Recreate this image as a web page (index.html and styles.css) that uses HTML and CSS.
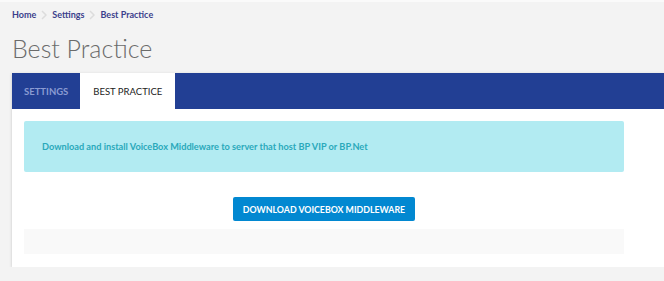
FILE: index.html
```html
<!DOCTYPE html>
<html lang="en">
<head>
    <meta charset="UTF-8">
    <meta name="viewport" content="width=device-width, initial-scale=1.0">
    <title>Best Practice</title>
    <link rel="stylesheet" href="styles.css">
</head>
<body>
    <div class="page">
        <nav class="breadcrumb">
            <a href="#">Home</a>
            <svg class="sep" width="6" height="10" viewBox="0 0 6 10"><path d="M1 1l4 4-4 4" fill="none" stroke="#dcdcdc" stroke-width="1.5"/></svg>
            <a href="#">Settings</a>
            <svg class="sep" width="6" height="10" viewBox="0 0 6 10"><path d="M1 1l4 4-4 4" fill="none" stroke="#dcdcdc" stroke-width="1.5"/></svg>
            <a href="#">Best Practice</a>
        </nav>
        <h1 class="page-title">Best Practice</h1>

        <div class="card">
            <div class="tabs">
                <a href="#" class="tab">Settings</a>
                <a href="#" class="tab active">Best Practice</a>
            </div>
            <div class="card-body">
                <div class="alert-info">
                    Download and install VoiceBox Middleware to server that host BP VIP or BP.Net
                </div>
                <div class="actions">
                    <button class="download-button">Download VoiceBox Middleware</button>
                </div>
                <div class="well"></div>
            </div>
        </div>
    </div>
</body>
</html>
```

FILE: styles.css
```css
* {
    margin: 0;
    padding: 0;
    box-sizing: border-box;
    font-family: 'Lato', 'Liberation Sans', sans-serif;
}
body {
    background-color: #f3f3f3;
    color: #333;
    border-top: 2px solid #fafafa;
}
.page {
    padding: 0 0 0 12px;
}
.breadcrumb {
    display: flex;
    align-items: center;
    height: 25px;
    font-size: 9px;
    font-weight: 700;
}
.breadcrumb a {
    color: #3b3f8c;
    text-decoration: none;
}
.breadcrumb .sep {
    margin: 0 5px;
}
.page-title {
    font-size: 25px;
    font-weight: 300;
    color: #6b6b6b;
    line-height: 1;
    padding: 9px 0 12px;
}
.card {
    background: white;
    box-shadow: 0 1px 3px rgba(0,0,0,0.18);
}
.tabs {
    display: flex;
    height: 36px;
    background-color: #223f94;
}
.tab {
    display: flex;
    align-items: center;
    padding: 0 12px;
    font-size: 9.5px;
    font-weight: 700;
    text-transform: uppercase;
    text-decoration: none;
    color: #8a9bd2;
}
.tab.active {
    background: white;
    color: #222;
    font-weight: 400;
    padding: 0 13px;
}
.card-body {
    width: 624px;
    padding: 12px 12px 13px;
}
.alert-info {
    height: 51px;
    display: flex;
    align-items: center;
    padding: 0 18px 1px;
    background-color: #b2ebf2;
    color: #2aa9bb;
    font-size: 9.2px;
    font-weight: 700;
    border-radius: 2px;
}
.actions {
    display: flex;
    justify-content: center;
    padding: 25px 0 8px;
}
.download-button {
    background-color: #0288d1;
    color: white;
    border: none;
    border-radius: 2px;
    height: 24px;
    padding: 0 10px;
    font-size: 8.8px;
    font-weight: 700;
    text-transform: uppercase;
    cursor: pointer;
}
.well {
    height: 25px;
    background-color: #f9f9f9;
}
```
